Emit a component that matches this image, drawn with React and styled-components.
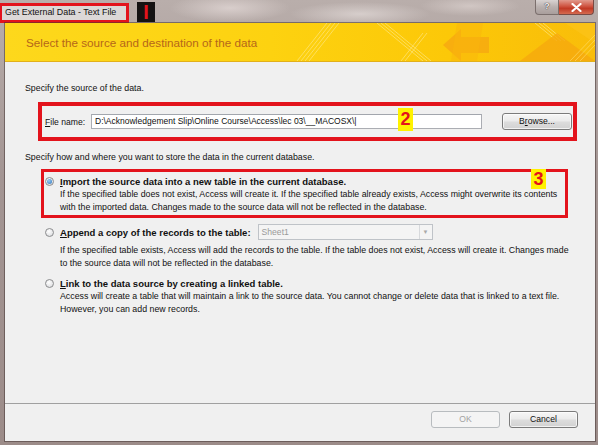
import React from 'react';
import styled, { createGlobalStyle } from 'styled-components';

const GlobalStyle = createGlobalStyle`
  html, body {
    margin: 0;
    padding: 0;
  }
  body {
    width: 598px;
    height: 445px;
    overflow: hidden;
    font-family: "Liberation Sans", Arial, sans-serif;
    color: #111;
  }
`;

const Frame = styled.div`
  width: 598px;
  height: 445px;
  display: flex;
  flex-direction: column;
  background:
    radial-gradient(ellipse 60px 14px at 230px 8px, rgba(230, 220, 218, 0.7), transparent),
    radial-gradient(ellipse 70px 12px at 360px 14px, rgba(235, 228, 226, 0.6), transparent),
    radial-gradient(ellipse 50px 10px at 470px 6px, rgba(225, 215, 212, 0.6), transparent),
    linear-gradient(180deg, #b9aeab 0%, #a39593 40%, #9c8c89 100%);
`;

const TitleBar = styled.div`
  height: 23px;
  display: flex;
  align-items: flex-start;
  flex-shrink: 0;
`;

const TitleBox = styled.div`
  margin-top: 3px;
  width: 129px;
  height: 20px;
  box-sizing: border-box;
  border: 3px solid #e3131c;
  border-left-width: 2px;
  background: #dcd8d7;
  font-size: 8.9px;
  line-height: 12px;
  padding-left: 3px;
  color: #111;
  white-space: nowrap;
`;

const Marker = styled.div`
  margin: 2px 0 0 8px;
  width: 18px;
  height: 20px;
  background: #141212;
  color: #e3131c;
  font-weight: 700;
  font-size: 20px;
  line-height: 20px;
  text-align: center;
`;

const CaptionButtons = styled.div`
  margin-left: auto;
  margin-right: 4px;
  display: flex;
  height: 15px;
`;

const HelpButton = styled.div`
  width: 24px;
  height: 15px;
  box-sizing: border-box;
  border: 1px solid #7b6f6d;
  border-top: none;
  border-radius: 0 0 0 4px;
  background: linear-gradient(180deg, #d9d3d2, #b9b0ae 50%, #a99e9c);
  color: #f4f0f0;
  font-size: 9px;
  font-weight: 700;
  text-align: center;
  line-height: 13px;
  text-shadow: 0 0 1px #3e3433, 0 0 1px #3e3433;
`;

const CloseButton = styled.div`
  width: 35px;
  height: 15px;
  box-sizing: border-box;
  border: 1px solid #7b4a44;
  border-left: none;
  border-top: none;
  border-radius: 0 0 4px 0;
  background: linear-gradient(180deg, #e19a8d, #cf5441 45%, #c13a26 60%, #d56a4f);
  display: flex;
  align-items: center;
  justify-content: center;
`;

const Client = styled.div`
  flex: 1;
  margin: 0 3px 4px 5px;
  display: flex;
  flex-direction: column;
  background: #f0f0f0;
  box-shadow: 0 0 0 1px rgba(70, 55, 52, 0.55);
`;

const Banner = styled.div`
  position: relative;
  height: 38px;
  flex-shrink: 0;
  display: flex;
  align-items: center;
  padding-left: 21px;
  background: linear-gradient(90deg, #fdd81c 0%, #fdd210 45%, #fcc808 75%, #f9bd0a 100%);
  border-bottom: 1px solid #e2b01a;
  overflow: hidden;
`;

const BannerTitle = styled.div`
  position: relative;
  font-size: 11.7px;
  color: #b5671a;
  z-index: 1;
`;

const BannerArt = styled.svg`
  position: absolute;
  left: 0;
  top: 0;
`;

const Content = styled.div`
  flex: 1;
  display: flex;
  flex-direction: column;
  align-items: flex-start;
  padding: 20px 0 0 20px;
`;

const Label = styled.div`
  font-size: 8.8px;
  line-height: 12px;
  margin-top: ${(p) => p.$top || 0}px;
`;

const SourceBox = styled.div`
  position: relative;
  margin: 8px 0 0 13px;
  width: 539px;
  height: 39px;
  box-sizing: border-box;
  border: 4px solid #e3131c;
  display: flex;
  align-items: center;
  padding-left: 3px;
`;

const FieldLabel = styled.span`
  width: 46px;
  font-size: 8.6px;
`;

const TextInput = styled.div`
  width: 391px;
  height: 15px;
  box-sizing: border-box;
  border: 1px solid #abadb3;
  border-top-color: #a2a6ad;
  background: #fff;
  font-size: 8.5px;
  line-height: 13px;
  padding-left: 3px;
  white-space: nowrap;
`;

const Button = styled.div`
  width: ${(p) => p.$width || 69}px;
  height: 17px;
  box-sizing: border-box;
  margin-left: ${(p) => p.$gap || 0}px;
  border: 1px solid ${(p) => (p.$disabled ? '#b8bcbf' : '#7b7b7b')};
  border-radius: 3px;
  background: ${(p) =>
    p.$disabled ? '#f4f4f4' : 'linear-gradient(180deg, #f6f6f6 0%, #ebebeb 48%, #dddddd 52%, #d2d2d2 100%)'};
  color: ${(p) => (p.$disabled ? '#a3a3a3' : '#111')};
  font-size: 8.6px;
  line-height: 15px;
  text-align: center;
  box-shadow: inset 0 0 0 1px ${(p) => (p.$disabled ? 'transparent' : 'rgba(255,255,255,0.7)')};
`;

const Badge = styled.div`
  position: absolute;
  left: ${(p) => p.$left}px;
  top: ${(p) => p.$top}px;
  width: 15px;
  height: ${(p) => p.$height || 23}px;
  background: #fff200;
  color: #e3131c;
  font-weight: 700;
  font-size: 18px;
  line-height: ${(p) => p.$height || 23}px;
  text-align: center;
`;

const Options = styled.div`
  margin: 6px 0 0 16px;
  display: flex;
  flex-direction: column;
`;

const Option = styled.div`
  position: relative;
  width: 527px;
  box-sizing: border-box;
  border: 3px solid ${(p) => (p.$active ? '#e3131c' : 'transparent')};
  padding: 3px 0 1px 1px;
  margin-top: ${(p) => p.$top || 0}px;
`;

const OptionRow = styled.div`
  display: flex;
  align-items: center;
  min-height: 13px;
`;

const Radio = styled.span`
  width: 9px;
  height: 9px;
  box-sizing: border-box;
  border-radius: 50%;
  border: 1px solid #8b8c8e;
  background: radial-gradient(circle at 40% 35%, #ffffff, #e2e3e5 70%);
  display: flex;
  align-items: center;
  justify-content: center;
  margin-right: 6px;
  flex-shrink: 0;
  &::after {
    content: '';
    width: 5px;
    height: 5px;
    border-radius: 50%;
    background: ${(p) => (p.$checked ? 'radial-gradient(circle at 40% 35%, #9ad0f5, #2b6fb8)' : 'transparent')};
  }
`;

const OptionTitle = styled.span`
  font-size: 9.5px;
  font-weight: 700;
  line-height: 13px;
  white-space: nowrap;
`;

const Select = styled.div`
  margin-left: 7px;
  width: 175px;
  height: 16px;
  box-sizing: border-box;
  border: 1px solid #bfc3c8;
  background: #f4f4f4;
  display: flex;
  align-items: center;
  color: #9a9a9a;
  font-size: 8.6px;
  padding-left: 3px;
`;

const SelectArrow = styled.span`
  margin-left: auto;
  width: 12px;
  height: 14px;
  border-left: 1px solid #d7d9dc;
  display: flex;
  align-items: center;
  justify-content: center;
  color: #a8a8a8;
  font-size: 6px;
`;

const Description = styled.div`
  margin: ${(p) => p.$gap || 0}px 0 0 15px;
  font-size: 8.8px;
  line-height: 13px;
  white-space: nowrap;
`;

const Footer = styled.div`
  height: 30px;
  flex-shrink: 0;
  border-top: 1px solid #a0a0a0;
  display: flex;
  justify-content: flex-end;
  align-items: flex-start;
  padding: 7px 17px 0 0;
`;

function BannerDecor() {
  return (
    <BannerArt width="590" height="38" viewBox="0 0 590 38">
      <g stroke="#ffe88a" strokeWidth="0.8" opacity="0.8">
        <line x1="292" y1="38" x2="322" y2="0" />
        <line x1="296" y1="38" x2="326" y2="0" />
        <line x1="300" y1="38" x2="330" y2="0" />
        <line x1="304" y1="38" x2="334" y2="0" />
        <line x1="372" y1="0" x2="418" y2="38" />
        <line x1="376" y1="0" x2="422" y2="38" />
        <line x1="380" y1="0" x2="426" y2="38" />
        <line x1="396" y1="38" x2="418" y2="10" />
        <line x1="400" y1="38" x2="422" y2="10" />
        <line x1="530" y1="0" x2="552" y2="18" />
        <line x1="534" y1="0" x2="556" y2="18" />
        <line x1="538" y1="0" x2="560" y2="18" />
      </g>
      <polygon points="438,22 456,6 456,14 484,14 484,30 456,30 456,38" fill="#f6a812" opacity="0.8" />
      <polygon points="452,0 478,0 472,38 446,38" fill="#f9b60c" opacity="0.5" />
      <polygon points="515,38 552,10 590,38" fill="#f6a90e" opacity="0.8" />
      <polygon points="560,0 590,0 590,20" fill="#fbc51c" opacity="0.6" />
      <g stroke="#ffe27a" strokeWidth="0.8" opacity="0.7">
        <line x1="565" y1="38" x2="590" y2="12" />
        <line x1="570" y1="38" x2="590" y2="17" />
        <line x1="575" y1="38" x2="590" y2="22" />
      </g>
    </BannerArt>
  );
}

export default function App() {
  return (
    <>
      <GlobalStyle />
      <Frame>
        <TitleBar>
          <TitleBox>Get External Data - Text File</TitleBox>
          <Marker>I</Marker>
          <CaptionButtons>
            <HelpButton>?</HelpButton>
            <CloseButton>
              <svg width="11" height="9" viewBox="0 0 11 9">
                <path d="M1.5 1 L9.5 8 M9.5 1 L1.5 8" stroke="#ffffff" strokeWidth="2.2" strokeLinecap="round" />
              </svg>
            </CloseButton>
          </CaptionButtons>
        </TitleBar>
        <Client>
          <Banner>
            <BannerDecor />
            <BannerTitle>Select the source and destination of the data</BannerTitle>
          </Banner>
          <Content>
            <Label>Specify the source of the data.</Label>
            <SourceBox>
              <FieldLabel>
                <u>F</u>ile name:
              </FieldLabel>
              <TextInput>D:\Acknowledgement Slip\Online Course\Access\lec 03\__MACOSX\|</TextInput>
              <Button $width={70} $gap={20}>
                B<u>r</u>owse...
              </Button>
              <Badge $left={356} $top={2}>2</Badge>
            </SourceBox>
            <Label $top={10}>Specify how and where you want to store the data in the current database.</Label>
            <Options>
              <Option $active>
                <OptionRow>
                  <Radio $checked />
                  <OptionTitle>
                    <u>I</u>mport the source data into a new table in the current database.
                  </OptionTitle>
                </OptionRow>
                <Description>
                  If the specified table does not exist, Access will create it. If the specified table already exists, Access might overwrite its contents
                </Description>
                <Description>
                  with the imported data. Changes made to the source data will not be reflected in the database.
                </Description>
                <Badge $left={487} $top={-3} $height={20}>3</Badge>
              </Option>
              <Option>
                <OptionRow>
                  <Radio />
                  <OptionTitle>
                    <u>A</u>ppend a copy of the records to the table:
                  </OptionTitle>
                  <Select>
                    Sheet1
                    <SelectArrow>▼</SelectArrow>
                  </Select>
                </OptionRow>
                <Description $gap={4}>
                  If the specified table exists, Access will add the records to the table. If the table does not exist, Access will create it. Changes made
                </Description>
                <Description>to the source data will not be reflected in the database.</Description>
              </Option>
              <Option $top={-3}>
                <OptionRow>
                  <Radio />
                  <OptionTitle>
                    <u>L</u>ink to the data source by creating a linked table.
                  </OptionTitle>
                </OptionRow>
                <Description>
                  Access will create a table that will maintain a link to the source data. You cannot change or delete data that is linked to a text file.
                </Description>
                <Description>However, you can add new records.</Description>
              </Option>
            </Options>
          </Content>
          <Footer>
            <Button $disabled>OK</Button>
            <Button $gap={9}>Cancel</Button>
          </Footer>
        </Client>
      </Frame>
    </>
  );
}
